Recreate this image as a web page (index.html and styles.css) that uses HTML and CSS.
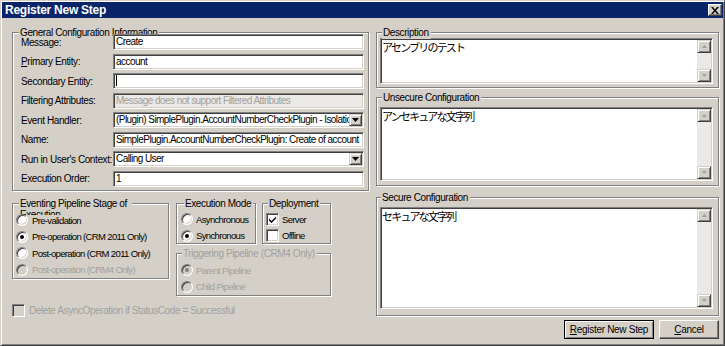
FILE: index.html
```html
<!DOCTYPE html>
<html lang="ja">

<head>
    <meta charset="UTF-8">
    <title>Register New Step</title>
    <link rel="stylesheet" href="styles.css">
</head>

<body>
    <div class="window">
        <div class="titlebar">
            <span class="title">Register New Step</span>
            <span class="close-btn">
                <svg width="8" height="7" viewBox="0 0 8 7"><path d="M0 0h2l2 2.5L6 0h2L5 3.5 8 7H6L4 4.5 2 7H0l3-3.5z" fill="#000"/></svg>
            </span>
        </div>

        <div class="content">
            <!-- left column -->
            <div class="left-col">
                <div class="group general">
                    <span class="group-title">General Configuration Information</span>
                    <div class="field-row"><label>Message:</label><div class="input">Create</div></div>
                    <div class="field-row"><label><u>P</u>rimary Entity:</label><div class="input">account</div></div>
                    <div class="field-row"><label>Secondary Entity:</label><div class="input"><span class="caret"></span></div></div>
                    <div class="field-row"><label>Filtering Attributes:</label><div class="input disabled">Message does not support Filtered Attributes</div></div>
                    <div class="field-row">
                        <label>Event Handler:</label>
                        <div class="input combo"><span class="value">(Plugin) SimplePlugin.AccountNumberCheckPlugin - Isolation Mode: None</span><span class="drop"><svg width="7" height="4" viewBox="0 0 7 4"><path d="M0 0h7L3.5 4z" fill="#000"/></svg></span></div>
                    </div>
                    <div class="field-row"><label>Name:</label><div class="input">SimplePlugin.AccountNumberCheckPlugin: Create of account</div></div>
                    <div class="field-row">
                        <label>Run in User's Context:</label>
                        <div class="input combo"><span class="value">Calling User</span><span class="drop"><svg width="7" height="4" viewBox="0 0 7 4"><path d="M0 0h7L3.5 4z" fill="#000"/></svg></span></div>
                    </div>
                    <div class="field-row"><label>Execution Order:</label><div class="input">1</div></div>
                </div>

                <div class="lower">
                    <div class="group stage">
                        <span class="group-title">Eventing Pipeline Stage of Execution</span>
                        <div class="opt"><span class="radio"></span>Pre-validation</div>
                        <div class="opt"><span class="radio checked"></span>Pre-operation (CRM 2011 Only)</div>
                        <div class="opt"><span class="radio"></span>Post-operation (CRM 2011 Only)</div>
                        <div class="opt disabled"><span class="radio"></span>Post-operation (CRM4 Only)</div>
                    </div>

                    <div class="lower-right">
                        <div class="lower-top">
                            <div class="group mode">
                                <span class="group-title">Execution Mode</span>
                                <div class="opt"><span class="radio"></span>Asynchronous</div>
                                <div class="opt"><span class="radio checked"></span>Synchronous</div>
                            </div>
                            <div class="group deploy">
                                <span class="group-title">Deployment</span>
                                <div class="opt"><span class="check checked"><svg width="7" height="7" viewBox="0 0 7 7"><path d="M0 2.5l2.5 2.5L7 0.5v2L2.5 7 0 4.5z" fill="#000"/></svg></span>Server</div>
                                <div class="opt"><span class="check"></span>Offline</div>
                            </div>
                        </div>
                        <div class="group trigger disabled">
                            <span class="group-title">Triggering Pipeline (CRM4 Only)</span>
                            <div class="opt"><span class="radio checked"></span>Parent Pipeline</div>
                            <div class="opt"><span class="radio"></span>Child Pipeline</div>
                        </div>
                    </div>
                </div>

                <div class="opt delete-row disabled"><span class="check"></span>Delete AsyncOperation if StatusCode = Successful</div>
            </div>

            <!-- right column -->
            <div class="right-col">
                <div class="group desc">
                    <span class="group-title">Description</span>
                    <div class="textarea">
                        <div class="text">アセンブリのテスト</div>
                        <div class="scrollbar">
                            <span class="sb-btn"><svg width="5" height="3" viewBox="0 0 5 3"><path d="M2.5 0L5 3H0z" fill="#a0a0a0"/></svg></span>
                            <span class="sb-btn"><svg width="5" height="3" viewBox="0 0 5 3"><path d="M0 0h5L2.5 3z" fill="#a0a0a0"/></svg></span>
                        </div>
                    </div>
                </div>

                <div class="group unsecure">
                    <span class="group-title">Unsecure Configuration</span>
                    <div class="textarea">
                        <div class="text">アンセキュアな文字列</div>
                        <div class="scrollbar">
                            <span class="sb-btn"><svg width="5" height="3" viewBox="0 0 5 3"><path d="M2.5 0L5 3H0z" fill="#a0a0a0"/></svg></span>
                            <span class="sb-btn"><svg width="5" height="3" viewBox="0 0 5 3"><path d="M0 0h5L2.5 3z" fill="#a0a0a0"/></svg></span>
                        </div>
                    </div>
                </div>

                <div class="group secure">
                    <span class="group-title">Secure Configuration</span>
                    <div class="textarea">
                        <div class="text">セキュアな文字列</div>
                        <div class="scrollbar">
                            <span class="sb-btn"><svg width="5" height="3" viewBox="0 0 5 3"><path d="M2.5 0L5 3H0z" fill="#a0a0a0"/></svg></span>
                            <span class="sb-btn"><svg width="5" height="3" viewBox="0 0 5 3"><path d="M0 0h5L2.5 3z" fill="#a0a0a0"/></svg></span>
                        </div>
                    </div>
                </div>

                <div class="buttons">
                    <button class="btn btn-default"><u>R</u>egister New Step</button>
                    <button class="btn btn-cancel"><u>C</u>ancel</button>
                </div>
            </div>
        </div>
    </div>
</body>

</html>
```

FILE: styles.css
```css
* {
    margin: 0;
    padding: 0;
    box-sizing: border-box;
}

body {
    background: #d4d0c8;
    font-family: "Liberation Sans", Arial, sans-serif;
    font-size: 10px;
    letter-spacing: -0.4px;
    color: #000;
}

.window {
    width: 725px;
    height: 346px;
    background: #d4d0c8;
    border: 1px solid;
    border-color: #d4d0c8 #404040 #404040 #d4d0c8;
    box-shadow: inset 1px 1px #fff, inset -1px -1px #808080;
    padding: 1px;
    display: flex;
    flex-direction: column;
}

.titlebar {
    height: 16px;
    background: #0a246a;
    display: flex;
    align-items: center;
    justify-content: space-between;
    padding: 0 1px 0 3px;
}

.title {
    color: #fff;
    font-weight: bold;
    font-size: 12px;
    letter-spacing: -0.25px;
}

.close-btn {
    width: 14px;
    height: 12px;
    background: #d4d0c8;
    border: 1px solid;
    border-color: #fff #404040 #404040 #fff;
    box-shadow: inset -1px -1px #808080;
    display: flex;
    align-items: center;
    justify-content: center;
}

.content {
    display: flex;
    gap: 7px;
    padding: 14px 4px 0 10px;
}

/* group boxes */
.group {
    position: relative;
    border: 1px solid #808080;
    box-shadow: 1px 1px 0 #fff, inset 1px 1px 0 #fff;
}

.group-title {
    position: absolute;
    top: -7px;
    left: 5px;
    padding: 0 2px 0 1px;
    background: #d4d0c8;
    line-height: 13px;
    white-space: nowrap;
}

.left-col {
    width: 357px;
}

.general {
    height: 159px;
    padding: 1px 4px 0 8px;
    display: flex;
    flex-direction: column;
    gap: 3.5px;
}

.general .group-title {
    left: 6px;
}

.field-row {
    position: relative;
    display: flex;
    align-items: center;
    height: 16px;
}

.field-row label {
    width: 92px;
    flex: none;
    white-space: nowrap;
}

.input {
    flex: 1;
    height: 16px;
    background: #fff;
    border: 1px solid;
    border-color: #808080 #fff #fff #808080;
    box-shadow: inset 1px 1px #404040, inset -1px -1px #d4d0c8;
    padding: 0 2px;
    line-height: 14px;
    letter-spacing: -0.55px;
    white-space: nowrap;
    overflow: hidden;
}

.input.disabled {
    background: #ebe9e5;
    color: #a0a0a0;
}

.caret {
    display: inline-block;
    width: 1px;
    height: 11px;
    background: #000;
    vertical-align: -2px;
}

.combo {
    display: flex;
    align-items: center;
    padding: 1px 1px 1px 2px;
}

.combo .value {
    flex: 1;
    overflow: hidden;
    white-space: nowrap;
}

.drop {
    flex: none;
    width: 13px;
    height: 12px;
    background: #d4d0c8;
    border: 1px solid;
    border-color: #d4d0c8 #404040 #404040 #d4d0c8;
    box-shadow: inset 1px 1px #fff, inset -1px -1px #808080;
    display: flex;
    align-items: center;
    justify-content: center;
}

/* lower options */
.lower {
    display: flex;
    gap: 7px;
    margin-top: 12px;
}

.stage {
    width: 157px;
    height: 76px;
    padding: 8px 0 0 3px;
}

.stage .group-title {
    left: 6px;
    width: 113px;
    height: 17px;
    top: -6px;
    line-height: 11px;
    white-space: normal;
    overflow: hidden;
}

.lower-right {
    width: 155px;
    display: flex;
    flex-direction: column;
    gap: 9px;
}

.lower-top {
    display: flex;
    gap: 6px;
    height: 41px;
}

.mode {
    width: 80px;
    padding: 7px 0 0 4px;
}

.mode .group-title {
    left: 7px;
}

.deploy {
    width: 69px;
    padding: 7px 0 0 3px;
}

.trigger {
    height: 43px;
    padding: 8px 0 0 4px;
}

.opt {
    display: flex;
    align-items: center;
    height: 16.5px;
    gap: 3px;
    font-size: 9.5px;
    letter-spacing: -0.65px;
    white-space: nowrap;
}

.stage .opt {
    gap: 4px;
}

.disabled .opt,
.opt.disabled {
    color: #a0a0a0;
}

.disabled .group-title {
    color: #a0a0a0;
}

.radio {
    position: relative;
    flex: none;
    width: 12px;
    height: 12px;
    border-radius: 50%;
    background: #fff;
    border: 1px solid;
    border-color: #808080 #fff #fff #808080;
    box-shadow: inset 1px 1px #404040, inset -1px -1px #d4d0c8;
}

.radio.checked::after {
    content: "";
    position: absolute;
    left: 3px;
    top: 3px;
    width: 4px;
    height: 4px;
    border-radius: 50%;
    background: #000;
}

.disabled .radio,
.opt.disabled .radio {
    background: #d4d0c8;
}

.disabled .radio.checked::after {
    background: #808080;
}

.check {
    flex: none;
    width: 13px;
    height: 13px;
    background: #fff;
    border: 1px solid;
    border-color: #808080 #fff #fff #808080;
    box-shadow: inset 1px 1px #404040, inset -1px -1px #d4d0c8;
    display: flex;
    align-items: center;
    justify-content: center;
}

.opt.disabled .check {
    background: #d4d0c8;
}

.delete-row {
    margin-top: 6px;
    height: 16px;
    gap: 4px;
    font-size: 10px;
    letter-spacing: -0.4px;
}

/* right column */
.right-col {
    width: 343px;
    display: flex;
    flex-direction: column;
}

.desc {
    height: 56px;
    padding: 5px 5px 0 3px;
}

.desc .textarea {
    height: 46px;
}

.unsecure {
    margin-top: 9px;
    height: 89px;
    padding: 9px 5px 0 3px;
}

.unsecure .textarea {
    height: 74px;
}

.secure {
    margin-top: 11px;
    height: 119px;
    padding: 9px 5px 0 3px;
}

.secure .group-title {
    left: 4px;
}

.secure .textarea {
    height: 102px;
}

.textarea {
    display: flex;
    background: #fff;
    border: 1px solid;
    border-color: #808080 #fff #fff #808080;
    box-shadow: inset 1px 1px #404040, inset -1px -1px #d4d0c8;
    padding: 1px;
}

.textarea .text {
    flex: 1;
    padding: 1px 0 0;
    font-family: "Noto Sans CJK JP", sans-serif;
    font-size: 11px;
    line-height: 12px;
    letter-spacing: -1.8px;
}

.scrollbar {
    width: 14px;
    display: flex;
    flex-direction: column;
    justify-content: space-between;
    background: #ebe9e5;
}

.sb-btn {
    height: 13px;
    background: #d4d0c8;
    border: 1px solid;
    border-color: #d4d0c8 #404040 #404040 #d4d0c8;
    box-shadow: inset 1px 1px #fff, inset -1px -1px #808080;
    display: flex;
    align-items: center;
    justify-content: center;
}

.buttons {
    margin-top: 4px;
    display: flex;
    justify-content: flex-end;
    gap: 5px;
}

.btn {
    height: 19px;
    background: #d4d0c8;
    border: 1px solid;
    border-color: #fff #404040 #404040 #fff;
    box-shadow: inset -1px -1px #808080;
    font-family: inherit;
    font-size: 10px;
    letter-spacing: -0.3px;
    white-space: nowrap;
    color: #000;
}

.btn-default {
    width: 90px;
    border-color: #000;
    box-shadow: inset 1px 1px #fff, inset -1px -1px #808080;
}

.btn-cancel {
    width: 60px;
}
```
